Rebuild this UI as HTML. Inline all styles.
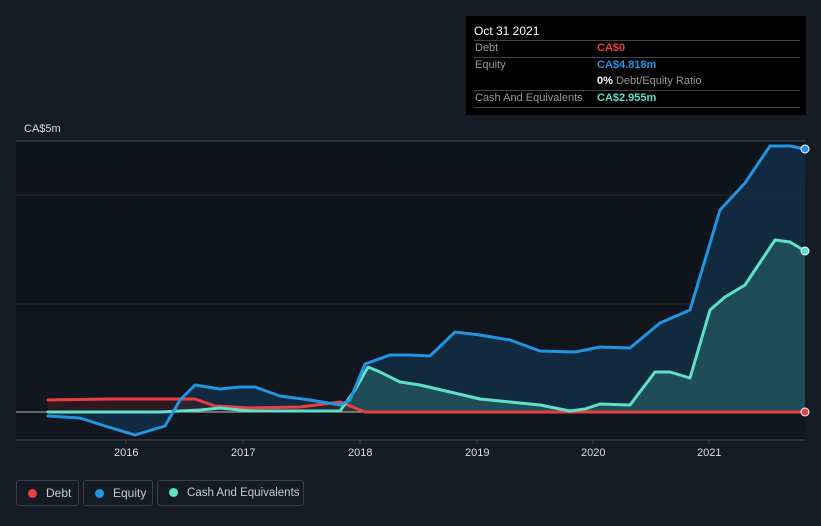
<!DOCTYPE html>
<html><head><meta charset="utf-8"><style>
body{margin:0;width:821px;height:526px;background:#151b25;font-family:"Liberation Sans",sans-serif;overflow:hidden;position:relative}
.tt{position:absolute;left:466px;top:16px;width:340px;height:99px;background:#000;color:#fff;font-size:11px}
.tt .r{position:absolute;left:8px;right:6px;border-top:1px solid #444}
.lg{position:absolute;top:480px;height:26px;border:1px solid #3a404a;border-radius:3px;color:#ccc;font-size:12px;line-height:24px;box-sizing:border-box;white-space:nowrap;overflow:hidden}
.lg i{display:inline-block;width:9px;height:9px;border-radius:50%;margin:0 9px 0 11px;vertical-align:-1px}
.ax{position:absolute;color:#ddd;font-size:11px;white-space:nowrap}
</style></head><body>
<div class="tt">
<div style="position:absolute;left:8px;top:8px;font-size:12px">Oct 31 2021</div>
<div class="r" style="top:24px"></div>
<div style="position:absolute;left:9px;top:26px;color:#999">Debt</div><div style="position:absolute;left:131px;top:26px;color:#e84142;font-weight:bold">CA$0</div>
<div class="r" style="top:41px"></div>
<div style="position:absolute;left:9px;top:43px;color:#999">Equity</div><div style="position:absolute;left:131px;top:43px;color:#2394df;font-weight:bold">CA$4.818m</div>
<div style="position:absolute;left:131px;top:59px;color:#999"><b style="color:#fff">0%</b> Debt/Equity Ratio</div>
<div class="r" style="top:74px"></div>
<div style="position:absolute;left:9px;top:76px;color:#999">Cash And Equivalents</div><div style="position:absolute;left:131px;top:76px;color:#5ee0c9;font-weight:bold">CA$2.955m</div>
<div class="r" style="top:91px"></div>
</div>
<div class="ax" style="left:24px;top:123px">CA$5m</div>
<div class="ax" style="left:24px;top:395px">CA$0</div>
<div class="ax" style="left:24px;top:422px">-CA$500k</div>
<div class="ax" style="left:114px;top:447px">2016</div>
<div class="ax" style="left:231px;top:447px">2017</div>
<div class="ax" style="left:348px;top:447px">2018</div>
<div class="ax" style="left:465px;top:447px">2019</div>
<div class="ax" style="left:581px;top:447px">2020</div>
<div class="ax" style="left:697px;top:447px">2021</div>
<svg style="position:absolute;left:0;top:0" width="821" height="526">
<defs><linearGradient id="g" x1="0" y1="0" x2="0" y2="1"><stop offset="0" stop-color="#0f131a"/><stop offset="1" stop-color="#12161e"/></linearGradient></defs>
<rect x="16" y="141" width="789" height="299" fill="url(#g)"/>
<line x1="16" y1="141" x2="805" y2="141" stroke="#444a54"/>
<line x1="16" y1="195" x2="805" y2="195" stroke="#222833"/>
<line x1="16" y1="304" x2="805" y2="304" stroke="#222833"/>
<line x1="16" y1="440" x2="805" y2="440" stroke="#444a54"/>
<g stroke="#444a54"><line x1="126" y1="440" x2="126" y2="444"/><line x1="243" y1="440" x2="243" y2="444"/><line x1="360" y1="440" x2="360" y2="444"/><line x1="477" y1="440" x2="477" y2="444"/><line x1="593" y1="440" x2="593" y2="444"/><line x1="709" y1="440" x2="709" y2="444"/></g>
<polygon fill="#12304a" opacity="0.8" points="48,416 80,418 105,426 135,435 165,426 180,400 195,385 220,389 240,387 255,387 280,396 310,400 340,405 350,400 365,364 390,355 410,355 430,356 455,332 480,335 510,340 540,351 575,352 600,347 630,348 660,323 690,310 720,210 745,183 770,146 790,146 805,149 805,412 48,412"/>
<polygon fill="#2a6a6a" opacity="0.55" points="340,411 355,390 368,367 380,372 400,382 420,385 450,392 480,399 510,402 540,405 570,411 585,409 600,404 630,405 655,372 670,372 690,378 710,310 725,297 745,285 775,240 790,242 805,251 805,412 340,412"/>
<polygon fill="#4a1c22" opacity="0.5" points="48,400 110,399 195,399 215,406 250,408 300,407 340,402 355,408 365,412 48,412"/>
<line x1="16" y1="412" x2="805" y2="412" stroke="#bbb" stroke-width="1"/>
<g fill="none" stroke-width="3" stroke-linejoin="round" stroke-linecap="round">
<polyline stroke="#e84142" points="48,400 110,399 195,399 215,406 250,408 300,407 340,402 355,408 365,412 805,412"/>
<polyline stroke="#5ee0c9" points="48,412 160,412 200,410 220,408 250,411 340,411 355,390 368,367 380,372 400,382 420,385 450,392 480,399 510,402 540,405 570,411 585,409 600,404 630,405 655,372 670,372 690,378 710,310 725,297 745,285 775,240 790,242 805,251"/>
<polyline stroke="#2394df" points="48,416 80,418 105,426 135,435 165,426 180,400 195,385 220,389 240,387 255,387 280,396 310,400 340,405 350,400 365,364 390,355 410,355 430,356 455,332 480,335 510,340 540,351 575,352 600,347 630,348 660,323 690,310 720,210 745,183 770,146 790,146 805,149"/>
</g>
<circle cx="805" cy="149" r="4" fill="#2394df" stroke="#fff"/>
<circle cx="805" cy="251" r="4" fill="#5ee0c9" stroke="#fff"/>
<circle cx="805" cy="412" r="4" fill="#e84142" stroke="#fff"/>
</svg>
<div class="lg" style="left:16px;width:63px"><i style="background:#e84142"></i>Debt</div>
<div class="lg" style="left:83px;width:70px"><i style="background:#2394df"></i>Equity</div>
<div class="lg" style="left:157px;width:147px;font-size:11.5px"><i style="background:#5ee0c9"></i>Cash And Equivalents</div>
</body></html>
